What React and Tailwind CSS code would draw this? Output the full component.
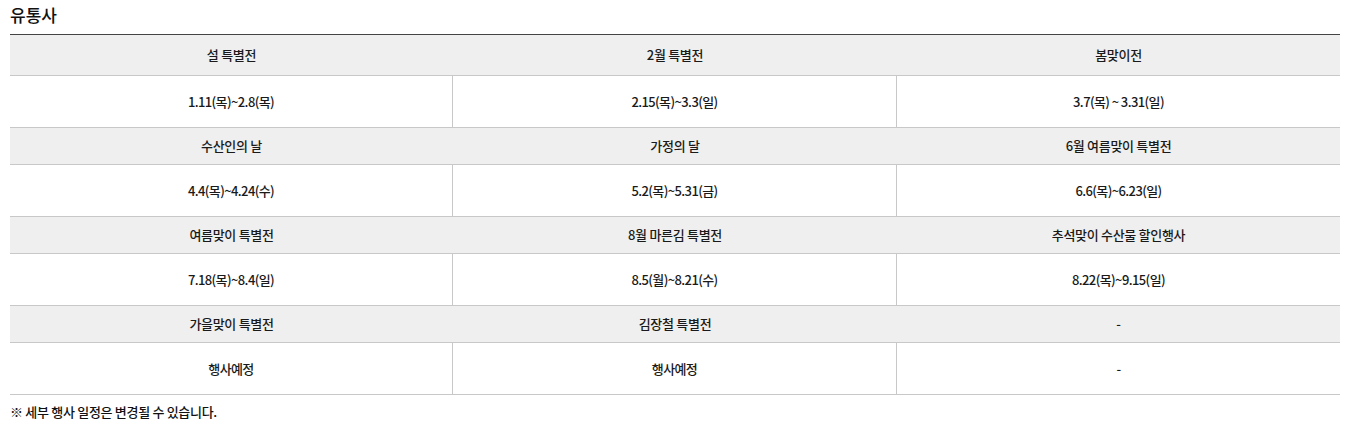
import React from "react";

const groups = [
  { heads: ["설 특별전", "2월 특별전", "봄맞이전"], dates: ["1.11(목)~2.8(목)", "2.15(목)~3.3(일)", "3.7(목) ~ 3.31(일)"] },
  { heads: ["수산인의 날", "가정의 달", "6월 여름맞이 특별전"], dates: ["4.4(목)~4.24(수)", "5.2(목)~5.31(금)", "6.6(목)~6.23(일)"] },
  { heads: ["여름맞이 특별전", "8월 마른김 특별전", "추석맞이 수산물 할인행사"], dates: ["7.18(목)~8.4(일)", "8.5(월)~8.21(수)", "8.22(목)~9.15(일)"] },
  { heads: ["가을맞이 특별전", "김장철 특별전", "-"], dates: ["행사예정", "행사예정", "-"] },
];

const font = { fontFamily: '"Malgun Gothic", "Noto Sans CJK KR", "Noto Sans", sans-serif' };

export default function App() {
  return (
    <div className="w-[1353px] h-[435px] bg-white text-[#1a1a1a] px-[10px]" style={font}>
      <div className="h-[34px] text-[17px] leading-[30px] font-medium text-[#111]">유통사</div>
      <div className="w-[1330px] border-t border-[#444]">
        {groups.map((g, gi) => (
          <div key={gi}>
            <div className={`grid grid-cols-[443px_444px_443px] bg-[#efefef] border-b border-[#c8c8c8] ${gi === 0 ? "h-[41px]" : "h-[37px]"}`}>
              {g.heads.map((h, i) => (
                <div key={i} className="flex items-center justify-center text-[13px] font-medium tracking-[-0.3px]">{h}</div>
              ))}
            </div>
            <div className="grid grid-cols-[443px_444px_443px] h-[52px] border-b border-[#c8c8c8]">
              {g.dates.map((d, i) => (
                <div key={i} className={`flex items-center justify-center text-[13px] font-medium tracking-[-0.6px] ${i < 2 ? "border-r border-[#c8c8c8]" : ""}`}>{d}</div>
              ))}
            </div>
          </div>
        ))}
      </div>
      <div className="pt-[7px] text-[13px] leading-[20px] font-medium tracking-[-0.3px] text-[#111]">※ 세부 행사 일정은 변경될 수 있습니다.</div>
    </div>
  );
}
